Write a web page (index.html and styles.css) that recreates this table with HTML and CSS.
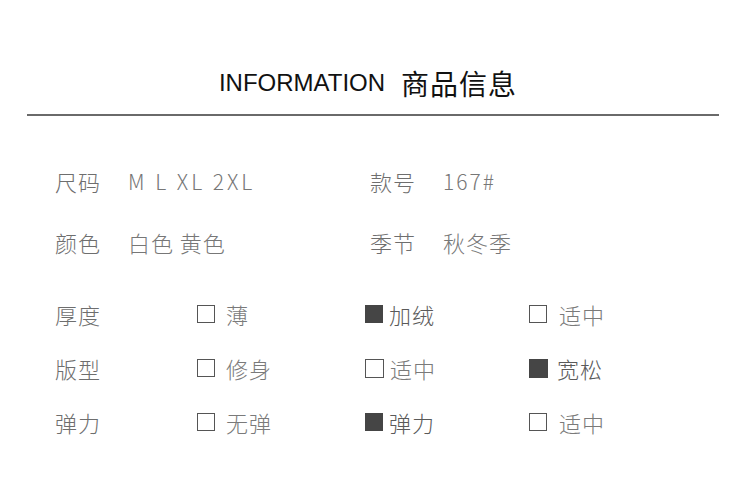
FILE: index.html
```html
<!DOCTYPE html>
<html lang="zh">
<head>
<meta charset="utf-8">
<link rel="stylesheet" href="styles.css">
</head>
<body>
<div class="page">
  <div class="title"><span class="en">INFORMATION</span><span class="zh">商品信息</span></div>
  <div class="rule"></div>

  <div class="specs">
    <div class="row">
      <span class="label">尺码</span><span class="val latin">M L XL 2XL</span>
      <span class="label">款号</span><span class="val latin num">167#</span>
    </div>
    <div class="row">
      <span class="label">颜色</span><span class="val">白色 黄色</span>
      <span class="label">季节</span><span class="val">秋冬季</span>
    </div>
  </div>

  <div class="attrs">
    <div class="arow">
      <span class="label">厚度</span>
      <span class="opt"><i class="box"></i><span class="otext">薄</span></span>
      <span class="opt tight"><i class="box on"></i><span class="otext dark">加绒</span></span>
      <span class="opt wide"><i class="box"></i><span class="otext">适中</span></span>
    </div>
    <div class="arow">
      <span class="label">版型</span>
      <span class="opt"><i class="box"></i><span class="otext">修身</span></span>
      <span class="opt tight"><i class="box lg"></i><span class="otext">适中</span></span>
      <span class="opt mid"><i class="box on lg"></i><span class="otext dark">宽松</span></span>
    </div>
    <div class="arow">
      <span class="label">弹力</span>
      <span class="opt"><i class="box"></i><span class="otext">无弹</span></span>
      <span class="opt tight"><i class="box on"></i><span class="otext dark">弹力</span></span>
      <span class="opt wide"><i class="box"></i><span class="otext">适中</span></span>
    </div>
  </div>
</div>
</body>
</html>
```

FILE: styles.css
```css
html, body {
  margin: 0;
  padding: 0;
  background: #fff;
}

body {
  width: 750px;
  height: 479px;
  overflow: hidden;
  font-family: "Noto Sans CJK SC", "Noto Sans", sans-serif;
  color: #707070;
}

.page {
  padding: 0 31px 0 27px;
}

.title {
  display: flex;
  justify-content: center;
  align-items: center;
  gap: 16px;
  height: 30px;
  margin-top: 68px;
  padding-right: 10px;
  color: #111;
}

.title .en {
  font-family: "Liberation Sans", Arial, sans-serif;
  font-size: 24px;
  line-height: 30px;
  letter-spacing: 0;
}

.title .zh {
  font-family: "Noto Sans CJK SC", sans-serif;
  font-size: 28px;
  line-height: 30px;
  font-weight: 400;
  letter-spacing: 1px;
}

.rule {
  height: 2px;
  background: #6a6a6a;
  margin-top: 16px;
}

.specs {
  margin-top: 50px;
  padding-left: 28px;
}

.row {
  display: grid;
  grid-template-columns: 73px 242px 73px auto;
  height: 30px;
  align-items: center;
}

.row + .row {
  margin-top: 31px;
}

.label {
  font-size: 22px;
  line-height: 30px;
  font-weight: 300;
  color: #6e6e6e;
  letter-spacing: 1px;
}

.val {
  font-size: 22px;
  line-height: 30px;
  font-weight: 300;
  color: #777;
  letter-spacing: 1px;
}

.val.latin {
  font-size: 21px;
  letter-spacing: 3px;
}

.val.latin.num {
  letter-spacing: 2px;
}

.attrs {
  margin-top: 42px;
  padding-left: 28px;
}

.arow {
  display: grid;
  grid-template-columns: 142px 168px 164px auto;
  height: 30px;
  align-items: center;
}

.arow + .arow {
  margin-top: 24px;
}

.opt {
  display: flex;
  align-items: center;
  gap: 11px;
}

.opt.tight {
  gap: 6px;
}

.opt.mid {
  gap: 9px;
}

.opt.wide {
  gap: 12px;
}

.box {
  display: block;
  box-sizing: border-box;
  width: 18px;
  height: 18px;
  border: 1.6px solid #555;
  background: #fff;
}

.box.lg {
  width: 19px;
  height: 19px;
}

.box.on {
  background: #454545;
  border-color: #454545;
}

.otext {
  font-size: 22px;
  line-height: 30px;
  font-weight: 300;
  color: #7a7a7a;
  letter-spacing: 1px;
}

.otext.dark {
  color: #5a5a5a;
}
```
